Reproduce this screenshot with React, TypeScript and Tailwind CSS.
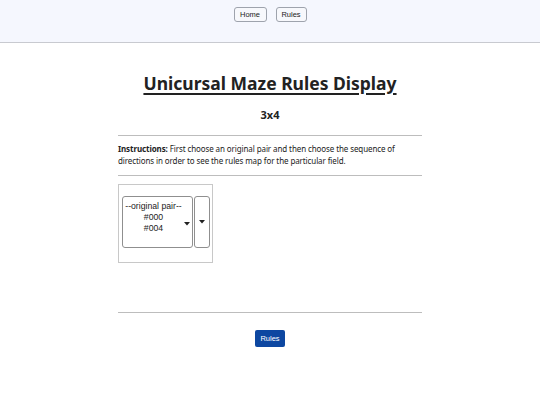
import React from "react";

function Caret() {
  return (
    <svg width="6" height="4" viewBox="0 0 6 4" className="shrink-0">
      <path d="M0 0 L6 0 L3 3.5 Z" fill="#222" />
    </svg>
  );
}

export default function App() {
  return (
    <div className="w-[540px] h-[405px] bg-white overflow-hidden" style={{ fontFamily: '"Noto Sans", sans-serif' }}>
      <header className="h-[43px] bg-[#f5f7fe] border-b border-[#c8cad0] flex justify-center items-start pt-[7px] gap-[9px]">
        <button className="h-[15px] w-[33px] rounded-[3px] border border-[#9ea3ad] bg-[#f7f8fc] text-[7.5px] text-[#222] leading-none" style={{ fontFamily: '"Liberation Sans", Arial, sans-serif' }}>Home</button>
        <button className="h-[15px] w-[31px] rounded-[3px] border border-[#9ea3ad] bg-[#f7f8fc] text-[7.5px] text-[#222] leading-none" style={{ fontFamily: '"Liberation Sans", Arial, sans-serif' }}>Rules</button>
      </header>
      <main className="w-[304px] mx-auto">
        <h1 className="text-center text-[17.5px] font-bold text-[#222] underline decoration-[1.5px] underline-offset-[3px] mt-[28px] leading-[24px]">Unicursal Maze Rules Display</h1>
        <h2 className="text-center text-[11px] font-bold text-[#222] mt-[13px] leading-[14px]">3x4</h2>
        <hr className="border-t border-[#bdbdbd] mt-[13px]" />
        <p className="text-[8px] tracking-[-0.1px] leading-[12px] text-[#222] mt-[7px]"><b>Instructions:</b> First choose an original pair and then choose the sequence of directions in order to see the rules map for the particular field.</p>
        <hr className="border-t border-[#bdbdbd] mt-[8px]" />
        <div className="mt-[8px] w-[95px] h-[79px] border border-[#c8c8c8] flex items-start pt-[11px] pl-[3px] gap-[1px]">
          <div className="w-[71px] h-[52px] border border-[#8f8f8f] rounded-[3px] flex items-start pt-[4px] pr-[2px]" style={{ fontFamily: '"Liberation Sans", Arial, sans-serif' }}>
            <div className="flex-1 text-center text-[8.7px] leading-[11px] text-[#222] whitespace-nowrap">
              <div>--original pair--</div>
              <div>#000</div>
              <div>#004</div>
            </div>
            <div className="self-center pb-[1px]"><Caret /></div>
          </div>
          <div className="w-[16px] h-[52px] border border-[#8f8f8f] rounded-[3px] flex items-center justify-center">
            <Caret />
          </div>
        </div>
        <hr className="border-t border-[#bdbdbd] mt-[49px]" />
        <div className="flex justify-center mt-[17px]">
          <button className="h-[17px] w-[30px] rounded-[2px] bg-[#0d47a1] text-white text-[7.5px] leading-none" style={{ fontFamily: '"Liberation Sans", Arial, sans-serif' }}>Rules</button>
        </div>
      </main>
    </div>
  );
}
